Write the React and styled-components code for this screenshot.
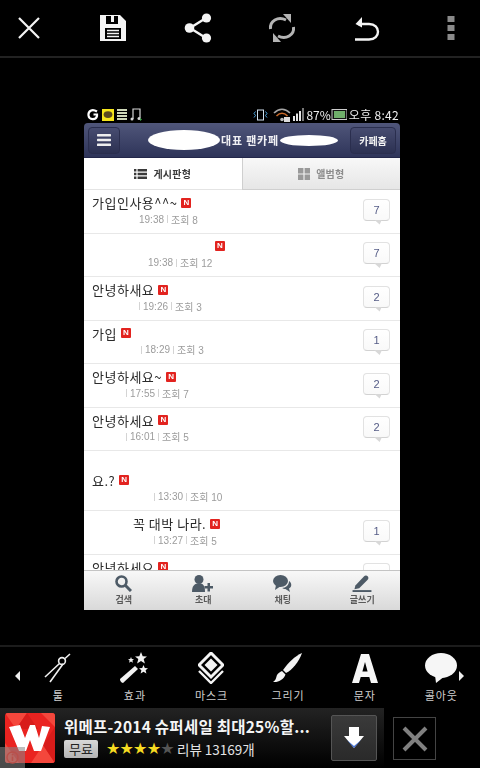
import React from "react";
import styled, { createGlobalStyle } from "styled-components";

const GlobalStyle = createGlobalStyle`
  html, body {
    margin: 0;
    padding: 0;
    background: #000;
  }
  * { box-sizing: border-box; }
  body {
    font-family: "Noto Sans CJK KR", "Noto Sans", sans-serif;
  }
`;

const Page = styled.div`
  width: 480px;
  height: 768px;
  display: flex;
  flex-direction: column;
  background: #000;
  overflow: hidden;
`;

const TopBar = styled.div`
  height: 58px;
  flex: none;
  display: flex;
  justify-content: space-between;
  align-items: center;
  border-bottom: 2px solid #222;
`;

const TopSlot = styled.div`
  width: 58px;
  height: 56px;
  display: flex;
  align-items: center;
  justify-content: center;
`;

const Stage = styled.div`
  flex: 1;
  padding: 48px 0 0 84px;
`;

const Phone = styled.div`
  width: 316px;
  filter: blur(0.35px);
`;

const StatusBar = styled.div`
  height: 17px;
  display: flex;
  align-items: center;
  justify-content: space-between;
  padding: 0 1px 0 3px;
  color: #eee;
  font-size: 12px;
`;

const StatusGroup = styled.div`
  display: flex;
  align-items: center;
  gap: ${(p) => p.$gap || 3}px;
`;

const Header = styled.div`
  height: 35px;
  display: flex;
  align-items: center;
  justify-content: space-between;
  padding: 0 4px;
  border-radius: 4px 4px 0 0;
  background: linear-gradient(#50567a, #2e3459);
  border-bottom: 1px solid #23274a;
`;

const HeaderButton = styled.div`
  width: ${(p) => p.$width}px;
  height: 27px;
  flex: none;
  display: flex;
  align-items: center;
  justify-content: center;
  border-radius: 4px;
  background: linear-gradient(#474c70, #2c3152);
  border: 1px solid #2a2e4e;
  color: #f2f2f2;
  font-size: 10px;
  font-weight: 700;
`;

const HeaderTitle = styled.div`
  flex: 1;
  display: flex;
  align-items: center;
  gap: 1px;
  padding-left: 28px;
  color: #f0f0f4;
  font-size: 11px;
  font-weight: 700;
  letter-spacing: 0.8px;
  white-space: nowrap;
`;

const Blob = styled.span`
  display: block;
  flex: none;
  width: ${(p) => p.$width}px;
  height: ${(p) => p.$height}px;
  background: #fff;
  border-radius: 50%;
`;

const Tabs = styled.div`
  height: 32px;
  display: flex;
`;

const Tab = styled.div`
  flex: 1;
  display: flex;
  align-items: center;
  justify-content: center;
  gap: 6px;
  font-size: 10px;
  font-weight: 700;
  letter-spacing: 0.2px;
  color: ${(p) => (p.$active ? "#3a3a3a" : "#8c8c8c")};
  background: ${(p) => (p.$active ? "#fff" : "linear-gradient(#f8f8f8, #e6e6e6)")};
  border-bottom: 1px solid ${(p) => (p.$active ? "#e4e4e4" : "#cfcfcf")};
  border-left: ${(p) => (p.$active ? "none" : "1px solid #cfcfcf")};
`;

const List = styled.div`
  height: 380px;
  background: #fff;
  overflow: hidden;
`;

const Row = styled.div`
  height: ${(p) => (p.$tall ? 60 : 43.5)}px;
  flex: none;
  display: flex;
  justify-content: space-between;
  align-items: flex-end;
  padding: 0 10px 0 8px;
  border-bottom: 1px solid #e8e8e8;
`;

const RowBody = styled.div`
  padding-bottom: 7px;
  display: flex;
  flex-direction: column;
`;

const Title = styled.div`
  height: 19px;
  padding-bottom: 1px;
  display: flex;
  align-items: center;
  gap: 4px;
  padding-left: ${(p) => p.$indent || 0}px;
  color: #2a2a2a;
  font-size: 13px;
  letter-spacing: 0.5px;
  white-space: nowrap;
`;

const NewBadge = styled.span`
  width: 10px;
  height: 10px;
  flex: none;
  display: flex;
  align-items: center;
  justify-content: center;
  background: #e2231f;
  border-radius: 1px;
  color: #fff;
  font-family: "Liberation Sans", sans-serif;
  font-size: 8px;
  font-weight: 700;
  letter-spacing: 0;
  line-height: 1;
`;

const Meta = styled.div`
  height: 13px;
  display: flex;
  align-items: center;
  padding-left: ${(p) => p.$indent}px;
  color: #9c9c9c;
  font-family: "Liberation Sans", "Noto Sans CJK KR", sans-serif;
  font-size: 10px;
  white-space: nowrap;
`;

const Divider = styled.span`
  width: 1px;
  height: 8px;
  margin: 0 3px;
  background: #d4d4d4;
`;

const Bubble = styled.div`
  position: relative;
  width: 27px;
  height: 22px;
  margin-bottom: 12px;
  display: flex;
  align-items: center;
  justify-content: center;
  background: linear-gradient(#fff, #f9f9f9);
  border: 1px solid #e2e2e2;
  border-bottom-color: #d2d2d2;
  border-radius: 4px;
  color: #555c86;
  font-family: "Liberation Sans", sans-serif;
  font-size: 11px;

  &::after {
    content: "";
    position: absolute;
    right: 7px;
    bottom: -5px;
    width: 8px;
    height: 5px;
    background: #d8d8d8;
    clip-path: polygon(0 0, 100% 0, 70% 100%);
  }
`;

const BottomNav = styled.div`
  height: 40px;
  display: grid;
  grid-template-columns: repeat(4, 79.5px);
  background: linear-gradient(#f8f8f8, #d9d9d9);
  border-top: 1px solid #c4c4c4;
`;

const NavItem = styled.div`
  display: flex;
  flex-direction: column;
  align-items: center;
  gap: 2px;
  padding-top: 4px;
  color: #5a5a5a;
  font-size: 9px;
  font-weight: 700;
  line-height: 11px;
`;

const ToolBar = styled.div`
  position: relative;
  height: 63px;
  flex: none;
  display: grid;
  grid-template-columns: repeat(6, 76.6px);
  padding: 1px 0 0 20px;
  border-top: 2px solid #1c1c1c;
`;

const Tool = styled.div`
  display: flex;
  flex-direction: column;
  align-items: center;
  color: #cfcfcf;
  font-size: 11px;
  letter-spacing: 0.9px;
  line-height: 14px;
`;

const ToolIcon = styled.div`
  height: 40px;
  display: flex;
  align-items: center;
  justify-content: center;
`;

const ScrollArrow = styled.span`
  position: absolute;
  top: 24px;
  ${(p) => (p.$right ? "left: 459px;" : "left: 15px;")}
  border-top: 5px solid transparent;
  border-bottom: 5px solid transparent;
  ${(p) => (p.$right ? "border-left: 5px solid #eee;" : "border-right: 5px solid #eee;")}
`;

const AdRow = styled.div`
  height: 60px;
  flex: none;
  display: flex;
`;

const Ad = styled.div`
  position: relative;
  width: 384px;
  display: flex;
  align-items: center;
  padding: 0 7px 0 5px;
  background: linear-gradient(#232323, #000);
`;

const AppIcon = styled.div`
  width: 50px;
  height: 50px;
  flex: none;
  border-radius: 3px;
  overflow: hidden;
`;

const AdText = styled.div`
  flex: 1;
  padding: 0 0 3px 9px;
  display: flex;
  flex-direction: column;
  gap: 4px;
`;

const AdTitle = styled.div`
  color: #f5f5f5;
  font-size: 15.5px;
  font-weight: 700;
  line-height: 20px;
  letter-spacing: 0.25px;
  white-space: nowrap;
`;

const AdMeta = styled.div`
  display: flex;
  align-items: center;
  color: #e4e4e4;
  font-size: 13.5px;
  line-height: 18px;
`;

const FreeTag = styled.span`
  width: 34px;
  height: 18px;
  display: flex;
  align-items: center;
  justify-content: center;
  margin-right: 8px;
  background: linear-gradient(#d8d8d8, #b4b4b4);
  border-radius: 2px;
  color: #222;
  font-size: 13px;
`;

const Stars = styled.span`
  display: flex;
  width: 71px;
  color: #f7dc22;
  font-size: 16px;
  letter-spacing: -0.8px;
  font-family: "DejaVu Sans", sans-serif;
`;

const DimStar = styled.span`
  color: #555;
`;

const DownloadButton = styled.div`
  width: 46px;
  height: 46px;
  flex: none;
  display: flex;
  align-items: center;
  justify-content: center;
  background: linear-gradient(#3a3a3a, #2a2a2a);
  border: 1px solid #555;
  border-radius: 2px;
`;

const InfoOverlay = styled.div`
  position: absolute;
  left: 0;
  bottom: 0;
  width: 25px;
  height: 21px;
  display: flex;
  align-items: center;
  justify-content: center;
  background: rgba(135, 135, 135, 0.55);
`;

const CloseBox = styled.div`
  width: 43px;
  height: 43px;
  margin: 9px 0 0 9px;
  display: flex;
  align-items: center;
  justify-content: center;
  border: 1px solid #444;
`;

const White = "#f4f4f4";

const TopIcons = [
  <svg key="x" width="24" height="24" viewBox="0 0 24 24">
    <path d="M2 2 L22 22 M22 2 L2 22" stroke={White} strokeWidth="2.2" />
  </svg>,
  <svg key="save" width="28" height="28" viewBox="0 0 28 28">
    <path
      fill={White}
      fillRule="evenodd"
      d="M1 1H21L27 7V27H1Z M7 2V10H19V2H15V8H12V2Z M6 14V25H22V14Z"
    />
    <path d="M8 16.5H20M8 19.5H20M8 22.5H20" stroke={White} strokeWidth="1.6" />
  </svg>,
  <svg key="share" width="28" height="30" viewBox="0 0 28 30">
    <path d="M22 5 L6 15 L22 25" stroke={White} strokeWidth="2.4" fill="none" />
    <circle cx="22.5" cy="5" r="4.6" fill={White} />
    <circle cx="5.5" cy="15" r="4.8" fill={White} />
    <circle cx="22.5" cy="25" r="4.6" fill={White} />
  </svg>,
  <svg key="sync" width="28" height="30" viewBox="0 0 28 30" fill="none">
    <path d="M2.5 16 C1.5 8 10 3 18 7" stroke="#b4b4b4" strokeWidth="3" />
    <path d="M15 1 L23 1 L23 10 Z" fill="#b4b4b4" />
    <path d="M25.5 14 C26.5 22 18 27 10 23" stroke="#b4b4b4" strokeWidth="3" />
    <path d="M13 29 L5 29 L5 20 Z" fill="#b4b4b4" />
  </svg>,
  <svg key="undo" width="26" height="26" viewBox="0 0 26 26" fill="none">
    <path d="M1 24.5 H15 C27 24.5 27 9 15 9 H4" stroke={White} strokeWidth="2.4" />
    <path d="M8 2 L1.5 9 L8 12.5 Z" fill={White} />
  </svg>,
  <svg key="more" width="8" height="24" viewBox="0 0 8 24" fill="#8a8a8a">
    <rect width="7" height="6" x="0.5" y="0" />
    <rect width="7" height="6" x="0.5" y="9" />
    <rect width="7" height="6" x="0.5" y="18" />
  </svg>,
];

const StatusLeft = () => (
  <StatusGroup>
    <svg width="12" height="12" viewBox="0 0 12 12" fill="none">
      <path d="M10 2.5 C5 -0.5 1 2 1.5 6.5 C2 11 9 11.5 10 7 V5.5 H6.5" stroke="#fff" strokeWidth="2.2" />
    </svg>
    <svg width="12" height="12" viewBox="0 0 12 12">
      <rect width="12" height="12" fill="#f5e51b" />
      <ellipse cx="6" cy="5.6" rx="4.4" ry="3.4" fill="#5a4a20" />
    </svg>
    <svg width="10" height="11" viewBox="0 0 10 11" fill="#cfd8b8">
      <path d="M0 0H10V2H0ZM0 3H10V5H0ZM0 6H10V8H0ZM0 9H10V11H0Z" />
    </svg>
    <svg width="12" height="13" viewBox="0 0 12 13" fill="none">
      <path d="M3 11 V1 H10 V10" stroke="#d8d8d8" strokeWidth="1.2" />
      <circle cx="2" cy="11" r="1.5" fill="#d8d8d8" />
      <circle cx="9" cy="10.5" r="1.5" fill="#d8d8d8" />
      <path d="M10 10 L12 11.5 L10 13 Z" fill="#3fae49" />
    </svg>
  </StatusGroup>
);

const StatusRight = () => (
  <StatusGroup $gap={2}>
    <svg width="15" height="12" viewBox="0 0 15 12" fill="none">
      <rect x="4.5" y="1" width="6" height="10" stroke="#cfe0ee" />
      <path d="M2.5 2.5 L1 4.5 L2.5 6.5 L1 8.5 M12.5 2.5 L14 4.5 L12.5 6.5 L14 8.5" stroke="#4aa3df" />
    </svg>
    <svg width="18" height="14" viewBox="0 0 18 14" fill="none" style={{ marginLeft: 3 }}>
      <path d="M1 5 C6 0 12 0 17 5" stroke="#a6a6a6" strokeWidth="1.6" />
      <path d="M3.5 8 C7 4.5 11 4.5 14.5 8" stroke="#c96a2a" strokeWidth="1.6" />
      <circle cx="9" cy="11.5" r="1.8" fill="#bbb" />
      <rect x="11" y="9" width="6" height="5" fill="#ddd" />
    </svg>
    <svg width="11" height="13" viewBox="0 0 11 13" fill="#e8e8e8">
      <rect x="0" y="8" width="2" height="5" />
      <rect x="3" y="5.5" width="2" height="7.5" />
      <rect x="6" y="3" width="2" height="10" />
      <rect x="9" y="0" width="2" height="13" fill="#777" />
    </svg>
    <span>87%</span>
    <svg width="16" height="11" viewBox="0 0 16 11" style={{ marginLeft: -2 }}>
      <rect x="1" y="0.5" width="15" height="10" fill="#111" stroke="#ccc" />
      <rect x="3" y="2" width="11" height="7" fill="#6fae6a" />
    </svg>
    <span style={{ letterSpacing: 0.3 }}>오후 8:42</span>
  </StatusGroup>
);

const MenuGlyph = () => (
  <svg width="14" height="12" viewBox="0 0 14 12" fill="#eee">
    <rect width="14" height="2.4" y="0" rx="0.6" />
    <rect width="14" height="2.4" y="4.8" rx="0.6" />
    <rect width="14" height="2.4" y="9.6" rx="0.6" />
  </svg>
);

const ListGlyph = () => (
  <svg width="13" height="10" viewBox="0 0 13 10" fill="#3a3a3a">
    <path d="M0 0H2.4V2.4H0ZM3.6 0H13V2.4H3.6ZM0 3.8H2.4V6.2H0ZM3.6 3.8H13V6.2H3.6ZM0 7.6H2.4V10H0ZM3.6 7.6H13V10H3.6Z" />
  </svg>
);

const GridGlyph = () => (
  <svg width="12" height="12" viewBox="0 0 12 12" fill="#999">
    <path d="M0 0H5.4V5.4H0ZM6.6 0H12V5.4H6.6ZM0 6.6H5.4V12H0ZM6.6 6.6H12V12H6.6Z" />
  </svg>
);

const posts = [
  { id: 1, title: "가입인사용^^~", meta: 47, time: "19:38", views: 8, count: 7, noLead: true },
  { id: 2, title: "", indent: 123, meta: 56, time: "19:38", views: 12, count: 7, noLead: true },
  { id: 3, title: "안녕하새요", meta: 44, time: "19:26", views: 3, count: 2 },
  { id: 4, title: "가입", meta: 46, time: "18:29", views: 3, count: 1 },
  { id: 5, title: "안녕하세요~", meta: 31, time: "17:55", views: 7, count: 2 },
  { id: 6, title: "안녕하세요", meta: 31, time: "16:01", views: 5, count: 2 },
  { id: 7, title: "요.?", meta: 59, time: "13:30", views: 10, tall: true },
  { id: 8, title: "꼭 대박 나라.", indent: 41, meta: 59, time: "13:27", views: 5, count: 1 },
  { id: 9, title: "안녕하세요", count: 1, clipped: true },
];

const navIcons = {
  search: (
    <svg width="17" height="17" viewBox="0 0 17 17" fill="none">
      <circle cx="6.5" cy="6.5" r="5" stroke="#4d5a66" strokeWidth="2.6" />
      <path d="M10.5 10.5 L16 16" stroke="#4d5a66" strokeWidth="3" />
    </svg>
  ),
  invite: (
    <svg width="22" height="17" viewBox="0 0 22 17" fill="#4d5a66">
      <circle cx="7" cy="4.5" r="4.5" />
      <path d="M0 17 C0 10 3 8.5 7 8.5 C11 8.5 13 10 13 17 Z" />
      <path d="M15.5 8H18V11H21V13.5H18V16.5H15.5V13.5H12.5V11H15.5Z" />
    </svg>
  ),
  chat: (
    <svg width="19" height="17" viewBox="0 0 19 17" fill="#4d5a66">
      <ellipse cx="7.5" cy="6" rx="7.5" ry="6" />
      <path d="M3 10 L2 15 L8 11 Z" />
      <path d="M16 6 C19 8 19 12 16 13.5 L17 17 L12.5 14 C11 14 10 13.5 9 13 C13 13 16 10 16 6 Z" />
    </svg>
  ),
  write: (
    <svg width="20" height="17" viewBox="0 0 20 18" fill="#4d5a66">
      <path d="M3 11 L12 1.5 C13 0.5 15 0.3 16 1.3 C17 2.3 17 4 16 5 L7 14 L2 15 Z" />
      <rect x="0" y="16" width="20" height="2" />
    </svg>
  ),
};

const tools = [
  {
    label: "툴",
    icon: (
      <svg width="28" height="30" viewBox="0 0 28 30" fill="none" stroke="#eee">
        <circle cx="18" cy="8" r="3.4" strokeWidth="1.6" />
        <path d="M15.5 10.5 L1 24 M19 11 L6 29 M21 5.5 L26 1" strokeWidth="1.6" />
      </svg>
    ),
  },
  {
    label: "효과",
    icon: (
      <svg width="31" height="32" viewBox="0 0 31 32" fill="#f2f2f2">
        <path d="M1 27 L16 14 L19 17 L4 31 Q1 30 1 27Z" />
        <path d="M22 0 L23.7 4.2 L28 4.4 L24.7 7 L25.9 11.5 L22 9 L18.1 11.5 L19.3 7 L16 4.4 L20.3 4.2Z" />
        <path d="M24.5 13 L25.8 16 L29 16.2 L26.6 18.2 L27.4 21.5 L24.5 19.7 L21.6 21.5 L22.4 18.2 L20 16.2 L23.2 16Z" />
        <path d="M12 5 L12.8 7 L15 7.2 L13.4 8.5 L13.9 10.7 L12 9.5 L10.1 10.7 L10.6 8.5 L9 7.2 L11.2 7Z" />
      </svg>
    ),
  },
  {
    label: "마스크",
    icon: (
      <svg width="26" height="32" viewBox="0 0 26 32" fill="none">
        <path d="M13 1 L25 13 L13 25 L1 13 Z" stroke="#f4f4f4" strokeWidth="3" fill="#000" />
        <path d="M13 6.5 L19.5 13 L13 19.5 L6.5 13 Z" fill="#f4f4f4" />
        <path d="M1 19 L13 31 L25 19" stroke="#f4f4f4" strokeWidth="2.4" />
      </svg>
    ),
  },
  {
    label: "그리기",
    icon: (
      <svg width="30" height="30" viewBox="0 0 30 30" fill="#f2f2f2">
        <path d="M29 0 C26 9 19 17 13 20 L10 17 C15 10 22 3 29 0 Z" />
        <path d="M9 18 L12.5 21.5 C11 26 6 29.5 0 29 C3 27 3 25 4 22 C5 20 7 19 9 18 Z" />
      </svg>
    ),
  },
  {
    label: "문자",
    icon: (
      <svg width="26" height="29" viewBox="0 0 26 29" fill="#f6f6f6">
        <path fillRule="evenodd" d="M9 0H17L26 29H19L17.3 23H8.7L7 29H0Z M10.4 17.5H15.6L13 8Z" />
      </svg>
    ),
  },
  {
    label: "콜아웃",
    icon: (
      <svg width="32" height="30" viewBox="0 0 32 30" fill="#f6f6f6">
        <ellipse cx="16" cy="12.5" rx="16" ry="12.5" />
        <path d="M10 22 L11 30 L20 23 Z" />
      </svg>
    ),
  },
];

const WLogo = () => (
  <svg width="50" height="50" viewBox="0 0 50 50">
    <rect width="50" height="50" fill="#ea2320" />
    <path d="M0 0H22L11 16Z M22 0H50V14L36 0Z M0 30L14 50H0Z M26 50L38 32L50 50Z" fill="#f4473c" />
    <path d="M11 16L22 0L33 16Z M38 32L50 14V50Z" fill="#d81c1a" />
    <polygon
      points="4,14 15,12 20,25 25,12 30,12 34,25 37,13 45,14 36,38 29,38 25,27 21,38 14,38"
      fill="#fff"
    />
  </svg>
);

const App = () => {
  return (
    <Page>
      <GlobalStyle />
      <TopBar>
        {TopIcons.map((icon) => (
          <TopSlot key={icon.key}>{icon}</TopSlot>
        ))}
      </TopBar>

      <Stage>
        <Phone>
          <StatusBar>
            <StatusLeft />
            <StatusRight />
          </StatusBar>
          <Header>
            <HeaderButton $width={32}>
              <MenuGlyph />
            </HeaderButton>
            <HeaderTitle>
              <Blob $width={72} $height={20} />
              <span>대표 팬카페</span>
              <Blob $width={58} $height={11} />
            </HeaderTitle>
            <HeaderButton $width={46}>카페홈</HeaderButton>
          </Header>
          <Tabs>
            <Tab $active>
              <ListGlyph />
              게시판형
            </Tab>
            <Tab>
              <GridGlyph />
              앨범형
            </Tab>
          </Tabs>
          <List>
            {posts.map((post) => (
              <Row key={post.id} $tall={post.tall}>
                <RowBody>
                  <Title $indent={post.indent}>
                    {post.title}
                    <NewBadge>N</NewBadge>
                  </Title>
                  <Meta $indent={post.meta}>
                    {!post.clipped && (
                      <>
                        {!post.noLead && <Divider />}
                        {post.time}
                        <Divider />
                        조회 {post.views}
                      </>
                    )}
                  </Meta>
                </RowBody>
                {post.count && <Bubble>{post.count}</Bubble>}
              </Row>
            ))}
          </List>
          <BottomNav>
            <NavItem>
              {navIcons.search}
              검색
            </NavItem>
            <NavItem>
              {navIcons.invite}
              초대
            </NavItem>
            <NavItem>
              {navIcons.chat}
              채팅
            </NavItem>
            <NavItem>
              {navIcons.write}
              글쓰기
            </NavItem>
          </BottomNav>
        </Phone>
      </Stage>

      <ToolBar>
        <ScrollArrow />
        {tools.map((tool) => (
          <Tool key={tool.label}>
            <ToolIcon>{tool.icon}</ToolIcon>
            {tool.label}
          </Tool>
        ))}
        <ScrollArrow $right />
      </ToolBar>

      <AdRow>
        <Ad>
          <AppIcon>
            <WLogo />
          </AppIcon>
          <AdText>
            <AdTitle>위메프-2014 슈퍼세일 최대25%할...</AdTitle>
            <AdMeta>
              <FreeTag>무료</FreeTag>
              <Stars>
                ★★★★<DimStar>★</DimStar>
              </Stars>
              리뷰 13169개
            </AdMeta>
          </AdText>
          <DownloadButton>
            <svg width="22" height="24" viewBox="0 0 22 24">
              <path d="M6 1H16V10H21L11 22L1 10H6Z" fill="#fff" />
              <path d="M4 14 L11 22 L18 14 L11 20 Z" fill="#3f6fd8" />
            </svg>
          </DownloadButton>
          <InfoOverlay>
            <svg width="13" height="13" viewBox="0 0 13 13" fill="none">
              <circle cx="6.5" cy="6.5" r="5.5" stroke="#b9504a" strokeWidth="1.4" />
              <path d="M6.5 5.5V10M6.5 3V4.4" stroke="#b9504a" strokeWidth="1.6" />
            </svg>
          </InfoOverlay>
        </Ad>
        <CloseBox>
          <svg width="26" height="26" viewBox="0 0 26 26">
            <path d="M2 2 L24 24 M24 2 L2 24" stroke="#808080" strokeWidth="4" />
          </svg>
        </CloseBox>
      </AdRow>
    </Page>
  );
};

export default App;
